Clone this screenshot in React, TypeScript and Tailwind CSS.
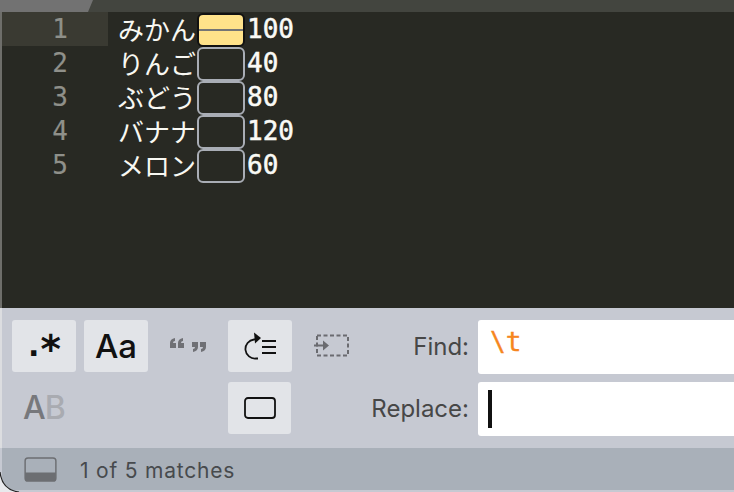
const rows = [
  { no: 1, name: 'みかん', value: '100' },
  { no: 2, name: 'りんご', value: '40' },
  { no: 3, name: 'ぶどう', value: '80' },
  { no: 4, name: 'バナナ', value: '120' },
  { no: 5, name: 'メロン', value: '60' },
];

const codeFont = 'font-["DejaVu_Sans_Mono","Noto_Sans_CJK_JP",monospace]';

const ToolButton = ({ children }: { children: React.ReactNode }) => (
  <div className="w-16 h-[52px] bg-[#e2e4e8] rounded-[3px] flex items-center justify-center text-[#111]">
    {children}
  </div>
);

const Slot = ({ children }: { children?: React.ReactNode }) => (
  <div className="w-16 h-[52px] flex items-center justify-center">{children}</div>
);

export default function App() {
  return (
    <div className="relative w-[734px] h-[492px] overflow-hidden flex flex-col bg-[#e8e9ec] font-['Inter',sans-serif]">
      {/* Tab strip */}
      <div className="relative h-3 shrink-0 bg-[#43453f]">
        <svg className="absolute left-0 top-0" width="100" height="12" viewBox="0 0 100 12">
          <polygon points="0,0 93,0 88,12 0,12" fill="#727272" />
        </svg>
      </div>

      {/* Editor */}
      <div className="h-[296px] shrink-0 bg-[#282923] border-l-2 border-[#6e6e6a] text-[26px] leading-[34px] text-[#f8f8f2]">
        {rows.map((row) => (
          <div key={row.no} className={`${codeFont} h-[34px] flex`}>
            <div
              className={`w-[106px] shrink-0 flex justify-end pr-[40px] text-[#8f908a] [-webkit-text-stroke:0.2px] ${
                row.no === 1 ? 'bg-[#3a3a32]' : ''
              }`}
            >
              {row.no}
            </div>
            <div className="w-[89px] shrink-0 pl-[10px] font-['Noto_Sans_CJK_JP',sans-serif] whitespace-nowrap">
              {row.name}
            </div>
            {row.no === 1 ? (
              <div className="w-[48px] h-[34px] mt-px rounded-[6px] border-2 border-[#111] bg-[#ffe28a] flex items-center">
                <div className="w-full h-0.5 bg-[#757575]" />
              </div>
            ) : (
              <div className="w-[48px] h-[34px] mt-px rounded-[6px] border-2 border-[#a9adb5]" />
            )}
            <div className="pl-0.5 text-[#fafaf6] [-webkit-text-stroke:0.5px]">{row.value}</div>
          </div>
        ))}
      </div>

      {/* Find panel */}
      <div className="h-[140px] shrink-0 bg-[#c6c9d2] border-l-2 border-[#dcdde0] pl-2.5 pt-3 flex flex-col gap-2">
        <div className="flex gap-2">
          <ToolButton>
            <span className="flex items-start h-[30px] w-[34px] font-['DejaVu_Sans',sans-serif] font-bold leading-none">
              <span className="text-[30px] w-[13px] ml-px">.</span>
              <span className="text-[39px] -mt-px">*</span>
            </span>
          </ToolButton>
          <ToolButton>
            <span className="text-[33px] leading-none font-medium">Aa</span>
          </ToolButton>
          <Slot>
            <svg width="38" height="20" viewBox="0 0 38 20" fill="#6f7075">
              <path d="M1 12 L1 7 Q1 3 6 2 L6 5 Q4 5 4 7 L7 7 L7 12 Z" />
              <path d="M9 12 L9 7 Q9 3 14 2 L14 5 Q12 5 12 7 L15 7 L15 12 Z" />
              <path d="M23 6 L29 6 L29 11 Q29 15 24 16 L24 13 Q26 13 26 11 L23 11 Z" />
              <path d="M31 6 L37 6 L37 11 Q37 15 32 16 L32 13 Q34 13 34 11 L31 11 Z" />
            </svg>
          </Slot>
          <ToolButton>
            <svg width="34" height="28" viewBox="0 0 34 28" fill="none" stroke="#111" strokeWidth="1.8">
              <path d="M15 26.5 H13 A9.5 9.5 0 0 1 11 7.5 L14 6.5" />
              <path d="M11 0.5 L18 6 L12 11.5 Z" fill="#111" stroke="none" />
              <path d="M19 9 H33 M19 15 H33 M19 21 H33" />
            </svg>
          </ToolButton>
          <Slot>
            <svg width="36" height="24" viewBox="0 0 36 24" fill="none" stroke="#6a6b70" strokeWidth="2">
              <rect x="3" y="1.5" width="31" height="20" strokeDasharray="4 2.5" />
              <path d="M0 11.5 H12" />
              <path d="M9 6.5 L15 11.5 L9 16.5 Z" fill="#6a6b70" stroke="none" />
            </svg>
          </Slot>
          <div className="flex-1 flex items-center justify-end gap-[9px]">
            <span className="text-[24px] text-[#474747]">Find:</span>
            <div className={`${codeFont} w-[256px] h-[54px] bg-white rounded-l-[3px] pl-3 text-[26px] leading-[44px] text-[#f6861f] [-webkit-text-stroke:0.4px]`}>
              \t
            </div>
          </div>
        </div>
        <div className="flex gap-2">
          <Slot>
            <span className="text-[32px] leading-none font-medium tracking-[-1px]">
              <span className="text-[#77787c]">A</span>
              <span className="text-[#a9abb1]">B</span>
            </span>
          </Slot>
          <Slot />
          <Slot />
          <ToolButton>
            <svg width="32" height="22" viewBox="0 0 32 22" fill="none" stroke="#111" strokeWidth="1.8">
              <rect x="1" y="1" width="30" height="20" rx="3" />
            </svg>
          </ToolButton>
          <Slot />
          <div className="flex-1 flex items-center justify-end gap-[9px]">
            <span className="text-[24px] text-[#474747]">Replace:</span>
            <div className="w-[256px] h-[54px] bg-white rounded-l-[3px] pl-2.5 pt-2">
              <div className="w-1 h-[38px] bg-[#111]" />
            </div>
          </div>
        </div>
      </div>

      {/* Status bar */}
      <div className="h-[42px] shrink-0 bg-[#a9b0b9] border-l-2 border-[#c6c9d2] flex items-center pl-[22px] gap-[23px]">
        <svg width="33" height="25" viewBox="0 0 34 26">
          <rect x="1" y="1" width="32" height="24" rx="3" fill="none" stroke="#6c6e72" strokeWidth="1.5" />
          <path d="M1 16 H33 V22 A3 3 0 0 1 30 25 H4 A3 3 0 0 1 1 22 Z" fill="#6c6e72" />
        </svg>
        <span className="text-[21px] mt-[3px] text-[#474a4d] tracking-[0.8px]">1 of 5 matches</span>
      </div>
      <div className="h-0.5 shrink-0 bg-[#c6c9d2]" />

      {/* Window corner */}
      <svg className="absolute left-0 bottom-0" width="20" height="20" viewBox="0 0 20 20">
        <path d="M0 0 Q2 18 19 20 H0 Z" fill="#e8e9ec" />
        <path d="M0 0 Q2 18 19 20" fill="none" stroke="#222" strokeWidth="1.2" />
      </svg>
    </div>
  );
}
